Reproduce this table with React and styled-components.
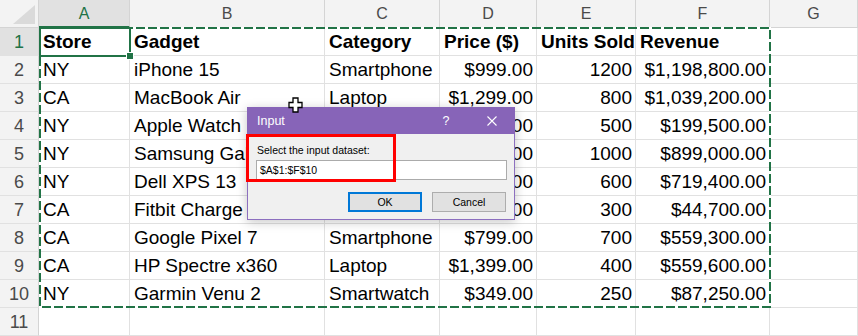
import React from 'react';
import styled, { createGlobalStyle } from 'styled-components';

const GlobalStyle = createGlobalStyle`
  html, body {
    margin: 0;
    padding: 0;
    background: #ffffff;
    overflow: hidden;
  }
  * {
    box-sizing: border-box;
  }
`;

const GREEN = '#217346';
const GRID = '#e1e1e1';

const Sheet = styled.div`
  position: relative;
  width: 858px;
  height: 336px;
  overflow: hidden;
  font-family: "Liberation Sans", Arial, sans-serif;
`;

const Grid = styled.div`
  display: grid;
  grid-template-columns: 39px 91px 195px 115px 97px 99px 134px 88px;
  grid-auto-rows: 28px;
`;

const Corner = styled.div`
  position: relative;
  background: #f3f3f3;
  border-right: 1px solid #d4d4d4;
  border-bottom: 1px solid #d4d4d4;
  &::after {
    content: '';
    position: absolute;
    right: 3px;
    bottom: 3px;
    width: 0;
    height: 0;
    border-left: 22px solid transparent;
    border-bottom: 19px solid #dadada;
  }
`;

const ColHead = styled.div`
  display: flex;
  align-items: center;
  justify-content: center;
  font-size: 16px;
  color: ${p => (p.$active ? GREEN : '#4a4a4a')};
  background: ${p => (p.$active ? '#e1e1e1' : '#f3f3f3')};
  border-right: 1px solid #d4d4d4;
  border-bottom: ${p => (p.$active ? `2px solid ${GREEN}` : '1px solid #d4d4d4')};
  padding-top: ${p => (p.$active ? '1px' : '0')};
`;

const RowHead = styled.div`
  display: flex;
  align-items: center;
  justify-content: center;
  font-size: 18px;
  line-height: 28px;
  color: ${p => (p.$active ? GREEN : '#4a4a4a')};
  background: ${p => (p.$active ? '#e1e1e1' : '#f3f3f3')};
  border-right: 1px solid #d4d4d4;
  border-bottom: 1px solid ${GRID};
`;

const Cell = styled.div`
  font-size: 19px;
  line-height: 28px;
  font-weight: ${p => (p.$bold ? 700 : 400)};
  text-align: ${p => (p.$right ? 'right' : 'left')};
  color: #000;
  white-space: nowrap;
  overflow: hidden;
  padding: 0 3px 0 4px;
  border-right: 1px solid ${GRID};
  border-bottom: 1px solid ${GRID};
`;

const Ants = styled.svg`
  position: absolute;
  left: 39px;
  top: 27px;
`;

const ActiveCell = styled.div`
  position: absolute;
  left: 39px;
  top: 27px;
  width: 92px;
  height: 30px;
  border: 2px solid ${GREEN};
  &::after {
    content: '';
    position: absolute;
    right: -5px;
    bottom: -5px;
    width: 6px;
    height: 6px;
    background: ${GREEN};
    border: 1px solid #fff;
  }
`;

const Cursor = styled.svg`
  position: absolute;
  left: 288px;
  top: 97px;
`;

const Dialog = styled.div`
  position: absolute;
  left: 247px;
  top: 107px;
  width: 268px;
  height: 113px;
  display: flex;
  flex-direction: column;
  background: #f0f0f0;
  border: 1px solid #8c6fbf;
  box-shadow: 0 2px 10px rgba(0, 0, 0, 0.22);
  font-family: "Liberation Sans", Arial, sans-serif;
`;

const TitleBar = styled.div`
  height: 27px;
  display: flex;
  align-items: center;
  background: #8764b8;
  color: #fff;
  margin: -1px -1px 0;
`;

const Title = styled.span`
  flex: 1;
  font-size: 12.5px;
  padding-left: 10px;
  padding-top: 1px;
`;

const TitleButton = styled.span`
  width: 46px;
  height: 27px;
  display: flex;
  align-items: center;
  justify-content: center;
  font-size: 12.5px;
`;

const Body = styled.div`
  position: relative;
  flex: 1;
  display: flex;
  flex-direction: column;
  padding: 10px 7px 0 8px;
`;

const Label = styled.div`
  font-size: 10.5px;
  line-height: 13px;
  color: #000;
  margin-left: 1px;
`;

const Field = styled.div`
  margin-top: 3px;
  height: 20px;
  background: #fff;
  border: 1px solid #ababab;
  font-size: 10.5px;
  line-height: 18px;
  padding-left: 3px;
  color: #000;
`;

const Buttons = styled.div`
  display: flex;
  justify-content: flex-end;
  gap: 10px;
  margin-top: 12px;
  padding-right: 1px;
`;

const Button = styled.div`
  width: 74px;
  height: 20px;
  display: flex;
  align-items: center;
  justify-content: center;
  font-size: 10.5px;
  background: #e1e1e1;
  border: ${p => (p.$primary ? '2px solid #0078d7' : '1px solid #adadad')};
  color: #000;
`;

const Highlight = styled.div`
  position: absolute;
  left: -2px;
  top: 0;
  width: 150px;
  height: 48px;
  border: 3px solid #ff0000;
`;

const cols = ['A', 'B', 'C', 'D', 'E', 'F', 'G'];

const rows = [
  ['Store', 'Gadget', 'Category', 'Price ($)', 'Units Sold', 'Revenue'],
  ['NY', 'iPhone 15', 'Smartphone', '$999.00', '1200', '$1,198,800.00'],
  ['CA', 'MacBook Air', 'Laptop', '$1,299.00', '800', '$1,039,200.00'],
  ['NY', 'Apple Watch', 'Smartwatch', '$399.00', '500', '$199,500.00'],
  ['NY', 'Samsung Galaxy S23', 'Smartphone', '$899.00', '1000', '$899,000.00'],
  ['NY', 'Dell XPS 13', 'Laptop', '$1,199.00', '600', '$719,400.00'],
  ['CA', 'Fitbit Charge 5', 'Wearable', '$149.00', '300', '$44,700.00'],
  ['CA', 'Google Pixel 7', 'Smartphone', '$799.00', '700', '$559,300.00'],
  ['CA', 'HP Spectre x360', 'Laptop', '$1,399.00', '400', '$559,600.00'],
  ['NY', 'Garmin Venu 2', 'Smartwatch', '$349.00', '250', '$87,250.00'],
  ['', '', '', '', '', ''],
];

const App = () => (
  <>
    <GlobalStyle />
    <Sheet>
      <Grid>
        <Corner />
        {cols.map(c => (
          <ColHead key={c} $active={c === 'A'}>{c}</ColHead>
        ))}
        {rows.map((r, i) => (
          <React.Fragment key={i}>
            <RowHead $active={i === 0}>{i + 1}</RowHead>
            {r.map((v, j) => (
              <Cell key={j} $bold={i === 0} $right={i > 0 && j >= 3}>{v}</Cell>
            ))}
            <Cell />
          </React.Fragment>
        ))}
      </Grid>

      <Ants width="732" height="282">
        <rect x="1" y="1" width="730" height="279" fill="none" stroke="#fff" strokeWidth="2" />
        <rect x="1" y="1" width="730" height="279" fill="none" stroke={GREEN} strokeWidth="2" strokeDasharray="9 3" />
      </Ants>
      <ActiveCell />

      <Dialog>
        <TitleBar>
          <Title>Input</Title>
          <TitleButton>?</TitleButton>
          <TitleButton>
            <svg width="10" height="10" viewBox="0 0 10 10">
              <path d="M0.5 0.5 L9.5 9.5 M9.5 0.5 L0.5 9.5" stroke="#fff" strokeWidth="1.1" />
            </svg>
          </TitleButton>
        </TitleBar>
        <Body>
          <Label>Select the input dataset:</Label>
          <Field>$A$1:$F$10</Field>
          <Buttons>
            <Button $primary>OK</Button>
            <Button>Cancel</Button>
          </Buttons>
          <Highlight />
        </Body>
      </Dialog>

      <Cursor width="15" height="16" viewBox="0 0 15 16">
        <path d="M5 1 H10 V5.5 H14 V10.5 H10 V15 H5 V10.5 H1 V5.5 H5 Z" fill="#fff" stroke="#000" strokeWidth="1.3" />
      </Cursor>
    </Sheet>
  </>
);

export default App;
